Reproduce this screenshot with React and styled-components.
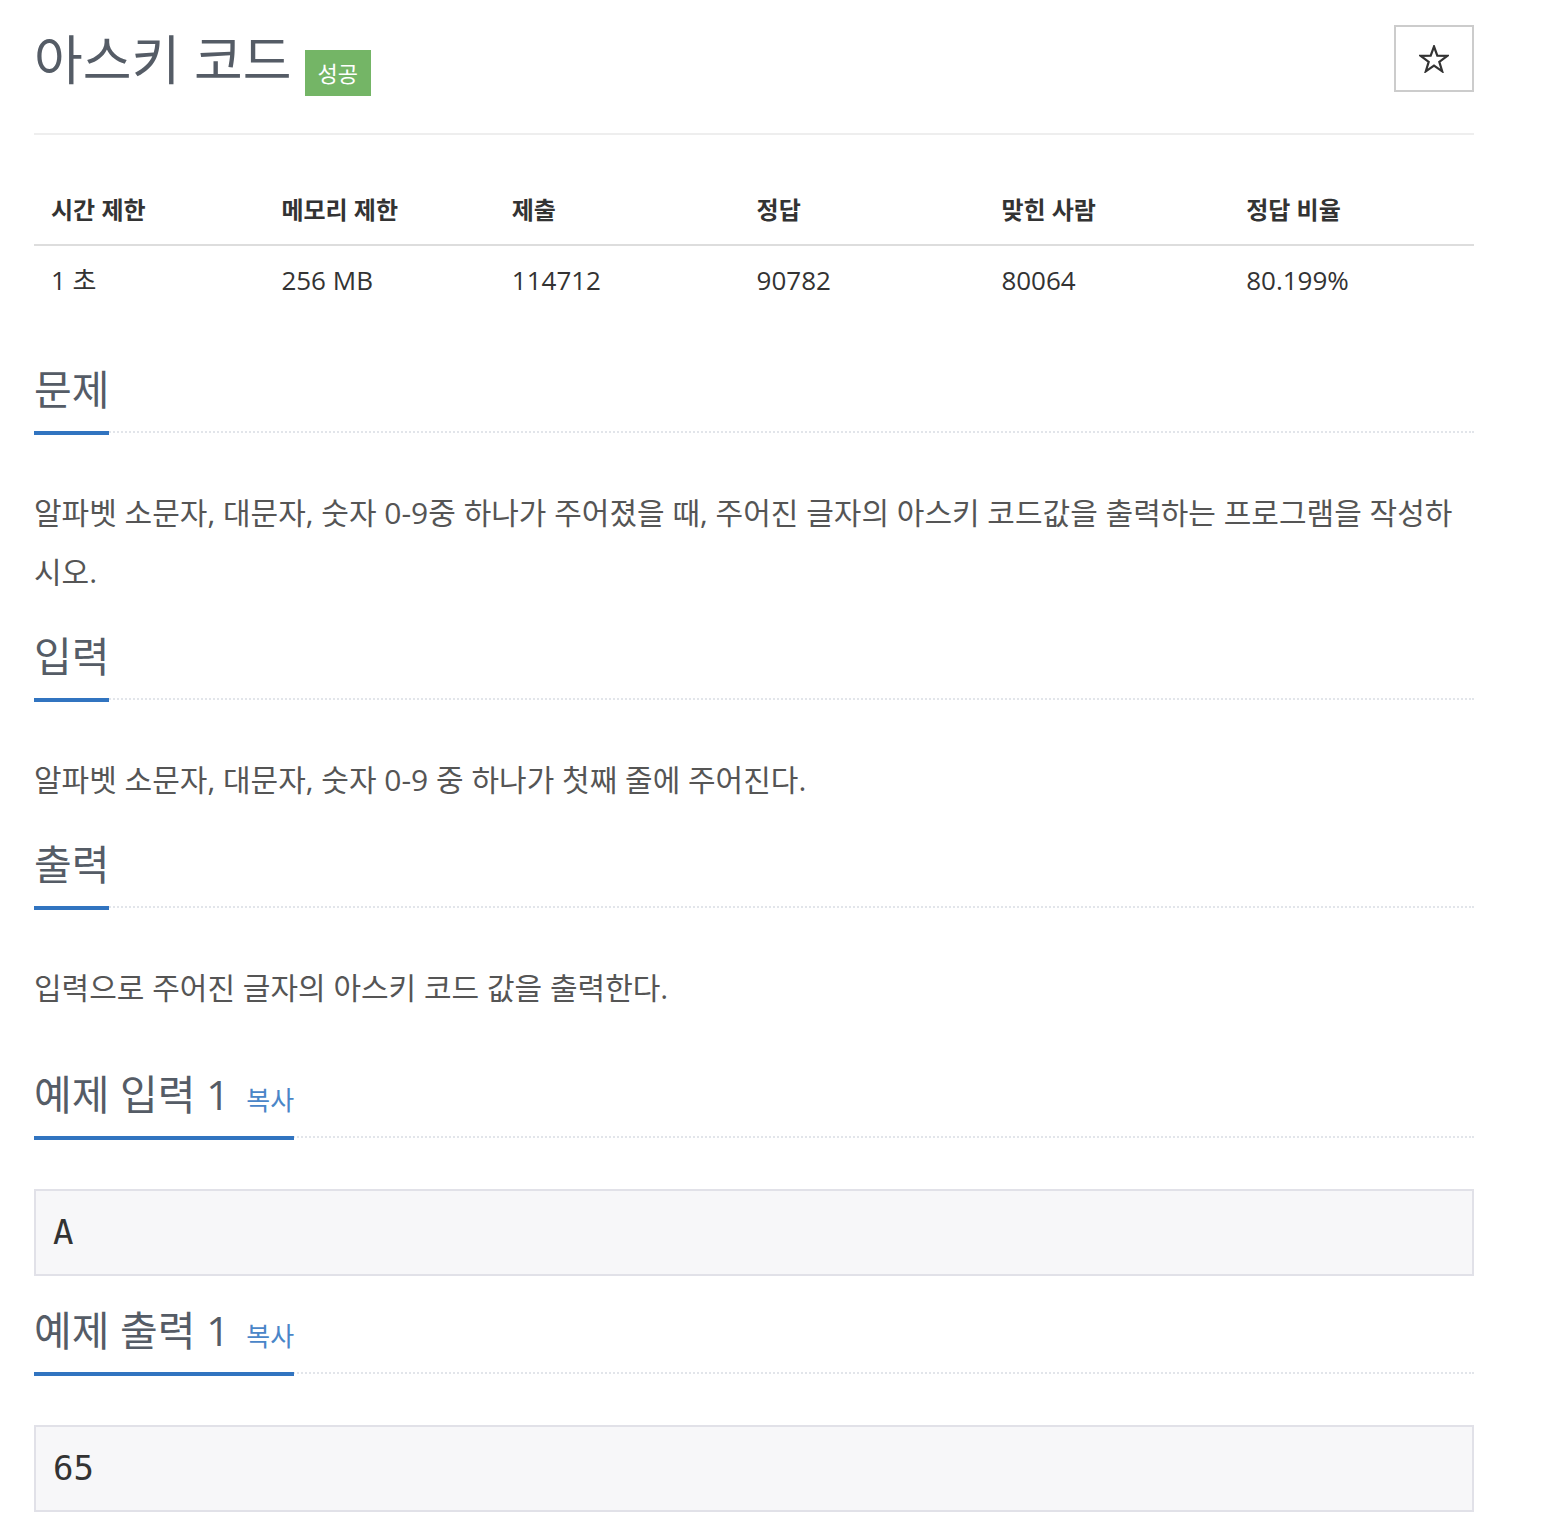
import React from 'react';
import styled, { createGlobalStyle } from 'styled-components';

const GlobalStyle = createGlobalStyle`
  * { box-sizing: border-box; }
  body {
    margin: 0;
    background: #fff;
    font-family: "Open Sans", "Noto Sans CJK KR", sans-serif;
    color: #333;
  }
`;

// --- Styled Components ---
const Page = styled.div`
  width: 1440px;
  margin-left: 34px;
  padding-bottom: 24px;
`;

const HeaderRow = styled.div`
  display: flex;
  justify-content: space-between;
  align-items: flex-start;
  padding-top: 25px;
  padding-bottom: 37px;
  border-bottom: 2px solid #eee;
`;

const TitleWrap = styled.div`
  display: flex;
  align-items: flex-start;
  gap: 13px;
`;

const Title = styled.h1`
  margin: 6px 0 0;
  font-size: 53px;
  line-height: 58px;
  font-weight: 400;
  color: #555c66;
`;

const Badge = styled.span`
  margin-top: 25px;
  height: 46px;
  padding: 0 13px;
  background: #74b566;
  color: #fff;
  font-size: 22px;
  line-height: 46px;
`;

const StarButton = styled.button`
  width: 80px;
  height: 67px;
  display: flex;
  align-items: center;
  justify-content: center;
  background: #fff;
  border: 2px solid #ccc;
  padding: 0;
  cursor: pointer;
`;

const InfoTable = styled.table`
  width: 100%;
  margin: 46px 0 0;
  border-collapse: collapse;
`;

const HeadCell = styled.th`
  width: ${p => p.$w};
  text-align: left;
  padding: 12px 17px 18px;
  font-size: 24px;
  line-height: 33px;
  font-weight: 700;
  color: #333;
  border-bottom: 2px solid #ddd;
`;

const Cell = styled.td`
  padding: 16px 17px;
  font-size: 26px;
  line-height: 37px;
  color: #333;
`;

const Section = styled.section`
  margin-top: ${p => p.$top}px;
`;

const Headline = styled.div`
  border-bottom: 2px dotted #e2e5ea;
`;

const HeadTitle = styled.h2`
  display: inline-block;
  margin: 0 0 -4px;
  padding-bottom: 19px;
  font-size: 41px;
  line-height: 45px;
  font-weight: 400;
  color: #555c66;
  border-bottom: 4px solid #3174c0;
`;

const CopyLink = styled.a`
  margin-left: 6px;
  font-size: 26px;
  line-height: 1;
  color: #4a86c8;
  text-decoration: none;
  cursor: pointer;
`;

const Text = styled.p`
  margin: 50px 0 0;
  font-size: 30px;
  line-height: 59px;
  color: #555;
`;

const SampleBox = styled.pre`
  margin: 51px 0 0;
  padding: 19px 17px;
  background: #f7f7f9;
  border: 2px solid #e1e1e8;
  font-family: "DejaVu Sans Mono", "Liberation Mono", monospace;
  font-size: 34px;
  line-height: 45px;
  color: #333;
`;

const StarIcon = () => (
  <svg width="30" height="28" viewBox="0 0 30 28" fill="none">
    <polygon
      points="15,1.5 18.3,10.6 28.3,10.8 20.3,16.8 23.2,26.3 15,20.6 6.8,26.3 9.7,16.8 1.7,10.8 11.7,10.6"
      stroke="#333"
      strokeWidth="2.2"
      strokeLinejoin="miter"
    />
  </svg>
);

const columns = [
  { label: '시간 제한', width: '16%', value: '1 초' },
  { label: '메모리 제한', width: '16%', value: '256 MB' },
  { label: '제출', width: '17%', value: '114712' },
  { label: '정답', width: '17%', value: '90782' },
  { label: '맞힌 사람', width: '17%', value: '80064' },
  { label: '정답 비율', width: '17%', value: '80.199%' },
];

const Headed = ({ title, copy, top = 33, children }) => (
  <Section $top={top}>
    <Headline>
      <HeadTitle>
        {title}
        {copy && <> <CopyLink>복사</CopyLink></>}
      </HeadTitle>
    </Headline>
    {children}
  </Section>
);

const App = () => (
  <>
    <GlobalStyle />
    <Page>
      <HeaderRow>
        <TitleWrap>
          <Title>아스키 코드</Title>
          <Badge>성공</Badge>
        </TitleWrap>
        <StarButton aria-label="즐겨찾기">
          <StarIcon />
        </StarButton>
      </HeaderRow>

      <InfoTable>
        <thead>
          <tr>
            {columns.map(c => (
              <HeadCell key={c.label} $w={c.width}>{c.label}</HeadCell>
            ))}
          </tr>
        </thead>
        <tbody>
          <tr>
            {columns.map(c => (
              <Cell key={c.label}>{c.value}</Cell>
            ))}
          </tr>
        </tbody>
      </InfoTable>

      <Headed title="문제" top={52}>
        <Text>
          알파벳 소문자, 대문자, 숫자 0-9중 하나가 주어졌을 때, 주어진 글자의 아스키 코드값을 출력하는 프로그램을 작성하시오.
        </Text>
      </Headed>

      <Headed title="입력">
        <Text>알파벳 소문자, 대문자, 숫자 0-9 중 하나가 첫째 줄에 주어진다.</Text>
      </Headed>

      <Headed title="출력">
        <Text>입력으로 주어진 글자의 아스키 코드 값을 출력한다.</Text>
      </Headed>

      <Headed title="예제 입력 1" copy top={55}>
        <SampleBox>A</SampleBox>
      </Headed>

      <Headed title="예제 출력 1" copy top={32}>
        <SampleBox>65</SampleBox>
      </Headed>
    </Page>
  </>
);

export default App;
